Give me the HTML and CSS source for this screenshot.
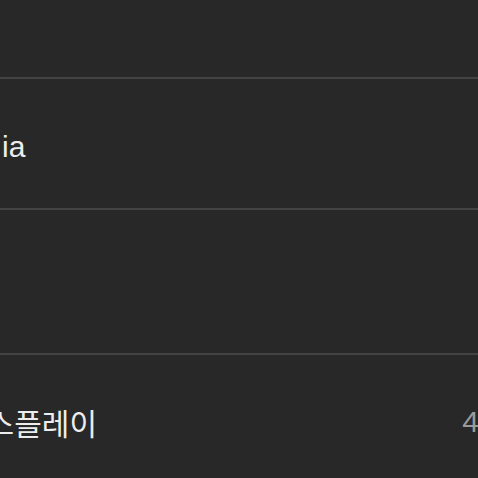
FILE: index.html
```html
<!DOCTYPE html>
<html>
<head>
  <title>설정</title>
  <link rel="stylesheet" href="styles.css">
</head>
<body>
<div class="list">
  <div class="row row-top"></div>
  <div class="row row-name">
    <span class="label">ia</span>
  </div>
  <div class="row row-empty"></div>
  <div class="row row-display">
    <span class="label">디스플레이</span>
    <span class="value">4K</span>
  </div>
</div>
</body>
</html>
```

FILE: styles.css
```css
/* Page reset, dark settings background */
html, body {
  margin: 0;
  padding: 0;
  height: 100%;
  overflow: hidden;
  background-color: #282828;
}

body {
  font-family: "Liberation Sans", "Noto Sans CJK KR", sans-serif;
  color: #ededed;
}

/* The list is wider than the window, so both ends are cut off */
.list {
  display: flex;
  flex-direction: column;
  margin: 0 -21px 0 -41px;
}

.row {
  display: flex;
  align-items: center;
  justify-content: space-between;
  box-sizing: border-box;
  border-bottom: 2px solid #434343;
  font-size: 30px;
}

.row-top {
  height: 79px;
}

.row-name {
  height: 131px;
  padding-top: 7px;
  padding-left: 43px;
}

.row-empty {
  height: 145px;
}

.row-display {
  height: 134px;
  border-bottom: none;
}

.label {
  white-space: nowrap;
}

.value {
  color: #9a9a9a;
  white-space: nowrap;
}
```
